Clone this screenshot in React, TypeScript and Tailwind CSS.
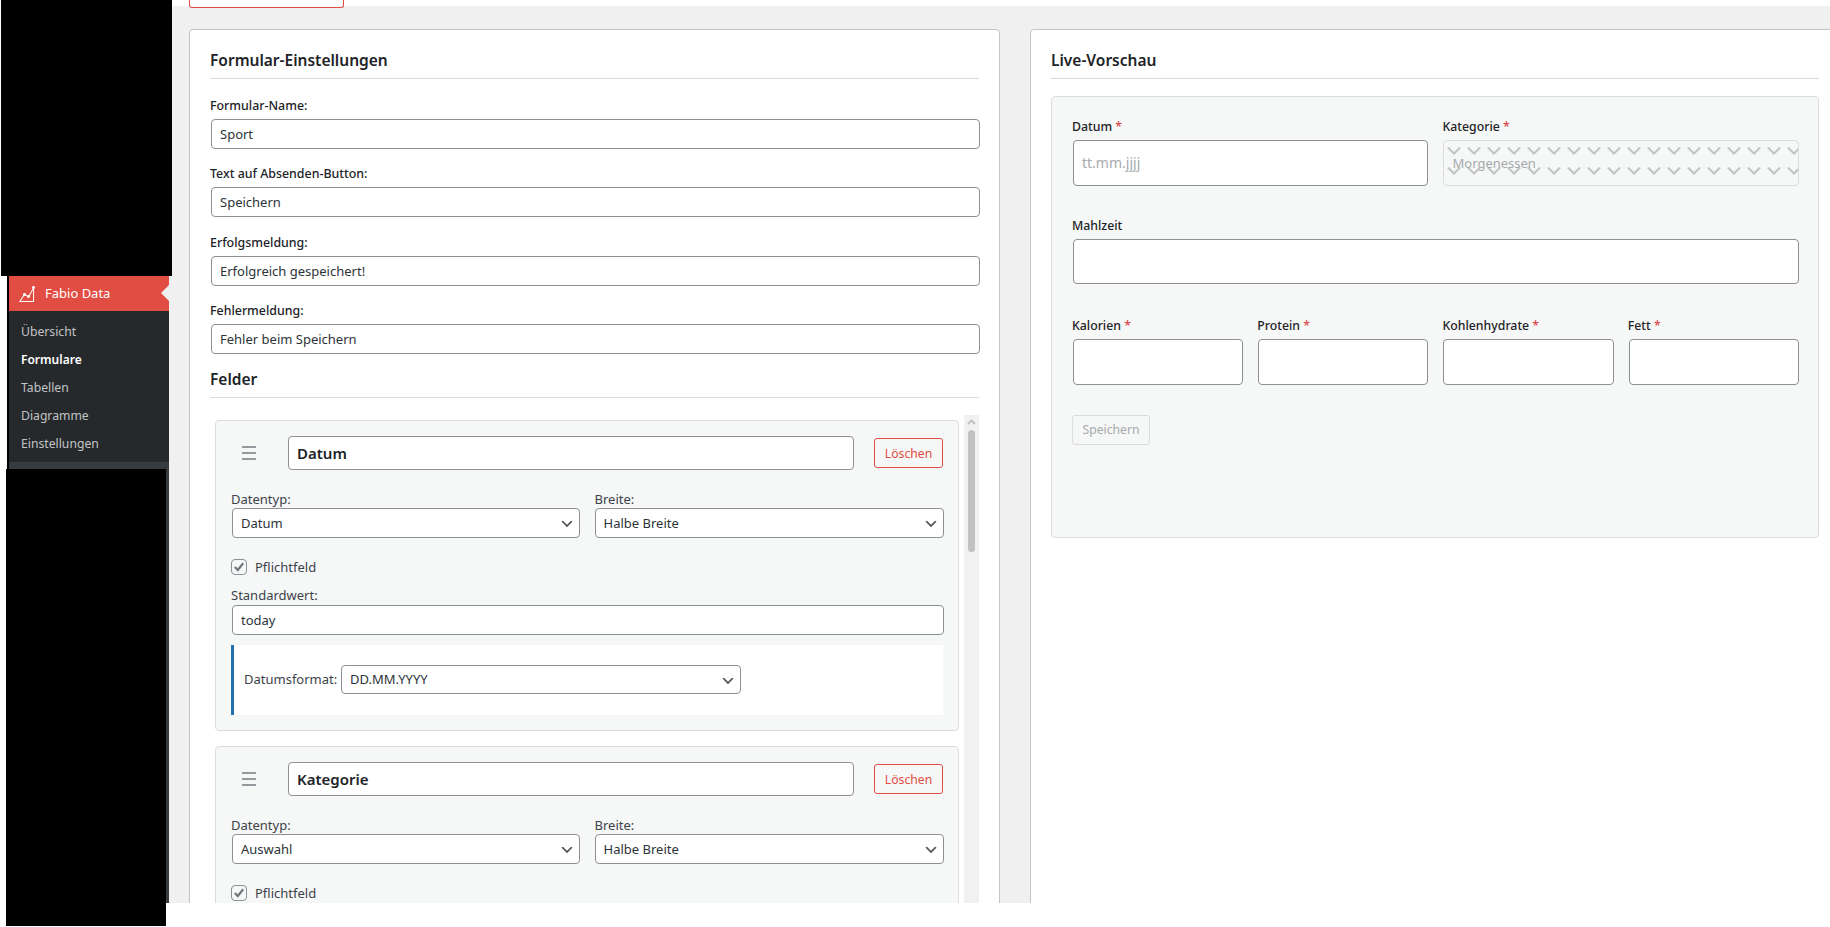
import React from "react";

const CHEVRON = "M5 6l5 5 5-5 2 1-7 7-7-7 2-1z";
const ICON =
  "M18 3.5c0 .62-.38 1.16-.92 1.38v13.11H1.99l4.22-6.73c-.13-.23-.21-.48-.21-.76C6 9.67 6.67 9 7.5 9S9 9.67 9 10.5c0 .13-.02.25-.05.37l1.44.63c.27-.3.67-.5 1.11-.5.18 0 .35.04.51.09l3.58-6.41c-.36-.27-.59-.7-.59-1.18 0-.83.67-1.5 1.5-1.5.19 0 .36.04.53.1l.05-.09v.11c.54.22.92.76.92 1.38zm-1.92 13.49V5.85l-3.29 5.89c.13.23.21.48.21.76 0 .83-.67 1.5-1.5 1.5s-1.5-.67-1.5-1.5l.01-.07-1.63-.72c-.25.18-.55.29-.88.29-.18 0-.35-.04-.51-.1l-3.2 5.09h12.29z";

const inputCls =
  "block w-full bg-white border border-[#8c8f94] rounded-[4px] px-[8px] text-[13px] text-[#2c3338] outline-none";

function Select({ value, className = "" }: { value: string; className?: string }) {
  return (
    <div className={`relative h-[30px] ${className}`}>
      <select
        defaultValue={value}
        className="block w-full h-full appearance-none bg-white border border-[#8c8f94] rounded-[4px] pl-[8px] pr-[24px] text-[13px] text-[#2c3338] outline-none"
      >
        <option>{value}</option>
      </select>
      <svg viewBox="0 0 20 20" className="absolute right-[5px] top-[8px] w-[16px] h-[16px] pointer-events-none">
        <path d={CHEVRON} fill="#555" />
      </svg>
    </div>
  );
}

function SettingField({ label, value }: { label: string; value: string }) {
  return (
    <div className="mb-[15.33px]">
      <label className="block h-[18px] mb-[5px] leading-[20px] text-[12.4px] font-medium text-[#1d2327]">{label}</label>
      <input readOnly defaultValue={value} className={`${inputCls} h-[30px] ml-[1px]`} />
    </div>
  );
}

function Heading({ children }: { children: React.ReactNode }) {
  return (
    <h2 className="h-[29px] pb-[8px] leading-[20px] border-b border-[#dcdcde] font-semibold text-[#1d2327] text-[15.5px]">
      {children}
    </h2>
  );
}

function FieldCard({ name, type, extra }: { name: string; type: string; extra?: boolean }) {
  return (
    <div className="border border-[#dcdcde] rounded-[4px] bg-[#f6f7f7] pt-[15px] px-[15px] pb-[15px] mb-[15px]">
      <div className="flex items-center h-[34px]">
        <svg viewBox="0 0 14 14" className="ml-[11px] w-[14px] h-[14px] shrink-0">
          <path d="M0 1h14M0 7h14M0 13h14" stroke="#787c82" strokeWidth="1.3" fill="none" />
        </svg>
        <input
          readOnly
          defaultValue={name}
          className="flex-1 min-w-0 ml-[32px] h-[34px] bg-white border border-[#8c8f94] rounded-[4px] pl-[8px] pr-[8px] text-[15px] font-semibold text-[#1d2327] outline-none"
        />
        <button className="ml-[20px] w-[69px] h-[30px] pt-[1px] border border-[#e14d43] rounded-[3px] text-[12.2px] text-[#e14d43] bg-[#f6f7f7]">
          Löschen
        </button>
      </div>
      <div className="flex gap-[15px] mt-[20px]">
        <div className="flex-1">
          <label className="block h-[18px] leading-[18px] text-[13px] text-[#3c434a]">Datentyp:</label>
          <Select value={type} className="ml-[1px]" />
        </div>
        <div className="flex-1">
          <label className="block h-[18px] leading-[18px] text-[13px] text-[#3c434a]">Breite:</label>
          <Select value="Halbe Breite" className="mr-[-1px]" />
        </div>
      </div>
      <div className="flex items-center h-[16px] mt-[21px]">
        <span className="relative w-[16px] h-[16px] border border-[#8c8f94] rounded-[4px] bg-[#f6f7f7] shrink-0">
          <svg viewBox="0 0 16 16" className="absolute inset-[-1px] w-[16px] h-[16px]">
            <path d="M3.8 8 L6.8 11 L12.2 4.2" stroke="#72777c" strokeWidth="2.2" fill="none" />
          </svg>
        </span>
        <span className="ml-[8px] text-[13px] text-[#3c434a]">Pflichtfeld</span>
      </div>
      {extra && (
        <>
          <label className="block h-[18px] mt-[11px] leading-[18px] text-[13px] text-[#3c434a]">Standardwert:</label>
          <input readOnly defaultValue="today" className={`${inputCls} h-[30px] ml-[1px] mt-[1px]`} />
          <div className="flex h-[70px] mt-[10px] border-l-[3px] border-[#2271b1] bg-white pl-[10px] pt-[20px]">
            <span className="w-[97px] h-[29px] leading-[29px] text-[13px] text-[#3c434a] whitespace-nowrap">Datumsformat:</span>
            <Select value="DD.MM.YYYY" className="w-[400px] !h-[29px]" />
          </div>
        </>
      )}
    </div>
  );
}

function PLabel({ text, req }: { text: string; req?: boolean }) {
  return (
    <label className="block h-[18px] leading-[20px] text-[12.3px] font-medium text-[#1d2327] whitespace-nowrap">
      {text}
      {req && <span className="text-[#d63638] font-normal"> *</span>}
    </label>
  );
}

function PInput({ placeholder, pos = "ml-[1px] w-full" }: { placeholder?: string; pos?: string }) {
  return (
    <input
      readOnly
      placeholder={placeholder}
      className={`block mt-[5px] h-[45.5px] bg-white border border-[#8c8f94] rounded-[4px] px-[8px] text-[14px] text-[#2c3338] placeholder:text-[#a7aaad] outline-none ${pos}`}
    />
  );
}

const COLS = [
  { t: "Kalorien", pos: "ml-[1px] w-full" },
  { t: "Protein", pos: "ml-[1px] w-[calc(100%-1px)]" },
  { t: "Kohlenhydrate", pos: "w-[calc(100%+1px)]" },
  { t: "Fett", pos: "ml-[1px] w-full" },
];

export default function App() {
  return (
    <div
      className="relative w-[1830px] h-[927px] overflow-hidden bg-white"
      style={{ fontFamily: '"Noto Sans", "Open Sans", sans-serif' }}
    >
      <div className="flex h-[903px]">
        {/* Sidebar */}
        <aside className="flex flex-col w-[162px] ml-[7px] border-l-2 border-black shrink-0 bg-[#363b3f]">
          <div className="h-[276px]" />
          <div className="relative flex items-center h-[35px] bg-[#e14d43] text-white text-[13px]">
            <svg viewBox="0 0 20 20" className="ml-[8px] w-[20px] h-[20px]">
              <path d={ICON} fill="#fff" />
            </svg>
            <span className="ml-[8px]">Fabio Data</span>
            <span className="absolute right-0 top-[9px] border-y-[8px] border-r-[8px] border-y-transparent border-r-[#f0f0f1]" />
          </div>
          <nav className="bg-[#26292c] h-[151px] pt-[7px]">
            {["Übersicht", "Formulare", "Tabellen", "Diagramme", "Einstellungen"].map((t) => (
              <div
                key={t}
                className={`h-[28px] leading-[28px] pl-[12px] ${
                  t === "Formulare" ? "text-[12px] font-semibold text-white" : "text-[12.2px] text-[#c3c4c7]"
                }`}
              >
                {t}
              </div>
            ))}
          </nav>
        </aside>

        {/* Main */}
        <main className="relative flex-1 min-w-0 overflow-hidden bg-[#f0f0f1]">
          <div className="absolute inset-x-0 top-0 h-[6px] bg-white" />
          <div className="relative ml-[20px] w-[155px] h-[8px] bg-white border-x border-b border-[#e14d43] rounded-b-[3px]" />
          <div className="flex gap-[30px] ml-[20px] mt-[21px] h-[900px]">
            {/* Left panel */}
            <section className="w-[811px] shrink-0 bg-white border border-[#c3c4c7] rounded-[4px] pt-[20px] px-[20px]">
              <Heading>Formular-Einstellungen</Heading>
              <div className="h-[17px]" />
              <SettingField label="Formular-Name:" value="Sport" />
              <SettingField label="Text auf Absenden-Button:" value="Speichern" />
              <SettingField label="Erfolgsmeldung:" value="Erfolgreich gespeichert!" />
              <SettingField label="Fehlermeldung:" value="Fehler beim Speichern" />
              <Heading>Felder</Heading>
              <div className="relative mt-[17px] h-[500px] pt-[5px] pl-[5px] pr-[20px]">
                <FieldCard name="Datum" type="Datum" extra />
                <FieldCard name="Kategorie" type="Auswahl" />
                <div className="absolute right-0 top-0 w-[15px] h-full bg-[#f1f1f1]">
                  <svg viewBox="0 0 15 14" className="w-[15px] h-[14px]">
                    <path d="M4 9 L7.5 5.5 L11 9" stroke="#c1c1c1" strokeWidth="2" fill="none" />
                  </svg>
                  <div className="ml-[4px] mt-[1px] w-[7px] h-[122px] rounded-[4px] bg-[#c1c1c1]" />
                </div>
              </div>
            </section>

            {/* Right panel */}
            <section className="w-[810px] shrink-0 bg-white border border-[#c3c4c7] rounded-[4px] pt-[20px] px-[20px]">
              <Heading>Live-Vorschau</Heading>
              <div className="mt-[17px] h-[442px] border border-[#dcdcde] rounded-[4px] bg-[#f6f7f7] pt-[20px] pl-[20px] pr-[20px]">
                <div className="flex gap-[15px]">
                  <div className="flex-1">
                    <PLabel text="Datum" req />
                    <PInput placeholder="tt.mm.jjjj" pos="ml-[1px] w-[calc(100%-1px)]" />
                  </div>
                  <div className="flex-1">
                    <PLabel text="Kategorie" req />
                    <div className="relative mt-[5px] h-[45.5px] w-[calc(100%+1px)] border border-[#dcdcde] rounded-[4px] bg-[#f6f7f7] overflow-hidden">
                      <svg className="absolute inset-0 w-full h-full">
                        <defs>
                          <pattern id="chev" width="20" height="20" patternUnits="userSpaceOnUse">
                            <path d={CHEVRON} fill="#c3c4c7" />
                          </pattern>
                        </defs>
                        <rect width="100%" height="100%" fill="url(#chev)" />
                      </svg>
                      <span className="absolute left-[9px] top-0 leading-[45px] text-[13px] text-[#a7aaad]">Morgenessen</span>
                    </div>
                  </div>
                </div>
                <div className="mt-[30px]">
                  <PLabel text="Mahlzeit" />
                  <PInput />
                </div>
                <div className="flex gap-[15px] mt-[32px]">
                  {COLS.map(({ t, pos }) => (
                    <div key={t} className="flex-1">
                      <PLabel text={t} req />
                      <PInput pos={pos} />
                    </div>
                  ))}
                </div>
                <button className="mt-[30px] w-[78px] h-[30px] pt-[1px] border border-[#dcdcde] rounded-[3px] bg-[#f6f7f7] text-[12.2px] text-[#a7aaad]">
                  Speichern
                </button>
              </div>
            </section>
          </div>
        </main>
      </div>

      {/* Redaction blocks lying over the page */}
      <div className="absolute left-[1px] top-0 w-[171px] h-[276px] bg-black" />
      <div className="absolute left-[6px] top-[469px] w-[160px] h-[457px] bg-black" />
    </div>
  );
}
